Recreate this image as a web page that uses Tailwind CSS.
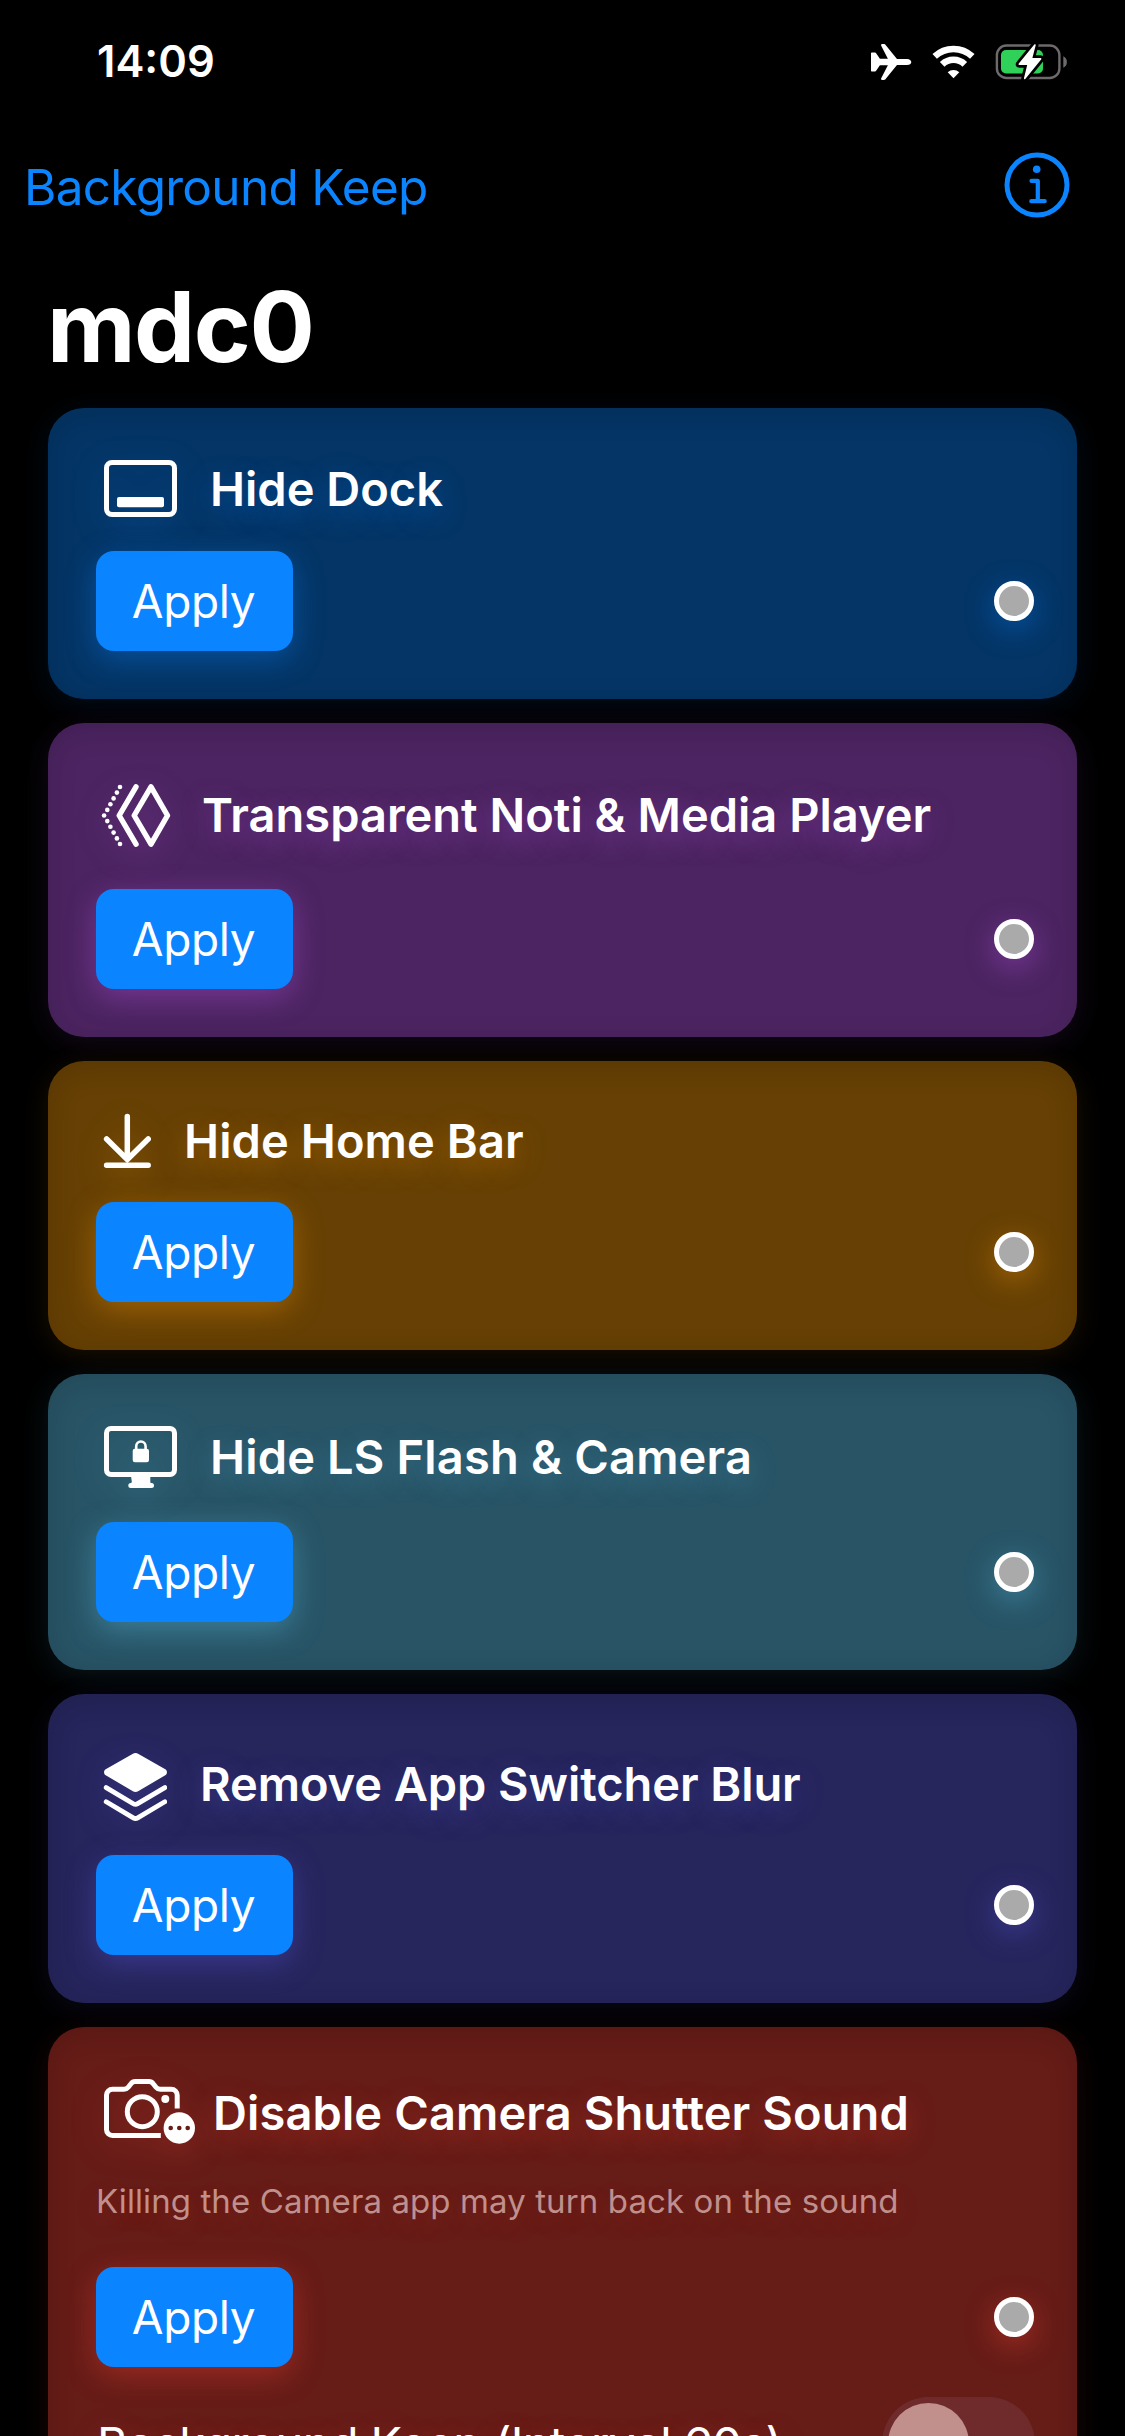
<!DOCTYPE html>
<html lang="en">
<head>
    <meta charset="UTF-8">
    <meta name="viewport" content="width=device-width, initial-scale=1.0">
    <title>mdc0</title>
    <!-- Tailwind CSS CDN -->
    <script src="https://cdn.jsdelivr.net/npm/@tailwindcss/browser@4"></script>
</head>
<body class="bg-black text-white font-[Inter,'Noto_Sans',sans-serif] w-[1125px] h-[2436px] overflow-hidden">

    <!-- Status bar -->
    <div class="h-[123px] flex items-center justify-between pl-[97px] pr-[57px]">
        <span class="text-[43.5px] leading-none font-semibold">14:09</span>
        <div class="flex items-center gap-5">
            <svg class="w-[41px] h-9" viewBox="0 0 41 36" fill="#fff">
                <path d="M1 8.6h2.6c.8 0 1.2.3 1.7 1l3.6 5.2h8L10.2 1.7C9.8.8 10.2 0 11.1 0h1.7c.8 0 1.3.2 1.8.9L26 14.9h10c2.6 0 4.3 1.5 4.3 3.1s-1.7 3.1-4.3 3.1H26L14.6 35.1c-.5.7-1 .9-1.8.9h-1.7c-.9 0-1.3-.8-.9-1.7l6.7-13.1h-8l-3.6 5.2c-.5.7-.9 1-1.7 1H1c-.6 0-1-.4-1-1V9.6c0-.6.4-1 1-1z"/>
            </svg>
            <svg class="w-[43px] h-9" viewBox="0 0 43 36" fill="none" stroke="#fff">
                <path d="M2.7 12.4a27.5 27.5 0 0 1 37.6 0" stroke-width="6.6"/>
                <path d="M10.2 20.4a16.2 16.2 0 0 1 22.6 0" stroke-width="6.6"/>
                <path d="M21.5 34.2l-5.8-5.9a8.3 8.3 0 0 1 11.6 0z" fill="#fff" stroke="none"/>
            </svg>
            <svg class="w-[73px] h-9" viewBox="0 0 73 36" fill="none">
                <rect x="1.9" y="1.5" width="62.5" height="32.5" rx="9.5" stroke="#6e6a6c" stroke-width="2.4"/>
                <path d="M68.3 12.3c2.3.9 3.6 3 3.6 5.7s-1.3 4.8-3.6 5.7z" fill="#6e6a6c"/>
                <rect x="6" y="6" width="42" height="23.5" rx="5" fill="#30d158"/>
                <path d="M39.3.6c.8-.9 1.7-.4 1.4.7l-3.3 12.6h8c1 0 1.3.8.7 1.6L30.5 34.7c-.8 1-1.8.5-1.5-.6l3.2-13h-7.7c-1 0-1.4-.8-.7-1.6z" fill="#fff" stroke="#000" stroke-width="5.5" paint-order="stroke"/>
            </svg>
        </div>
    </div>

    <!-- Nav bar -->
    <div class="h-[127px] flex items-center justify-between pl-6 pr-[55px]">
        <a class="pt-0.5 text-[49.5px] leading-none tracking-[-0.72px] text-[#0a84ff]">Background Keep</a>
        <svg class="w-[66px] h-[66px] mb-[3px]" viewBox="0 0 66 66" fill="none" stroke="#0a84ff" stroke-linecap="round" stroke-linejoin="round">
            <circle cx="33" cy="33" r="30" stroke-width="5"/>
            <circle cx="32.7" cy="17.3" r="3.8" fill="#0a84ff" stroke="none"/>
            <path d="M27.5 28.9h6.3v20M27.3 49.2h13.4" stroke-width="4.2"/>
        </svg>
    </div>

    <h1 class="h-[149px] flex items-center pl-[47px] pt-1 text-[97px] leading-none font-bold tracking-[-1.4px]">mdc0</h1>

    <!-- Tweaks list -->
    <div class="px-12 pt-[9px] flex flex-col gap-6">

        <div class="h-[291px] p-12 pr-[43px] rounded-[36px] bg-[#043566] shadow-[inset_0_6px_30px_rgba(0,0,0,0.14),0_6px_30px_rgba(10,132,255,0.1)]">
            <div class="h-[65px] flex items-center gap-[33px]">
                <svg class="w-[81px] h-[65px] drop-shadow-[0_8px_15px_rgba(10,132,255,0.25)]" viewBox="0 0 81 65" fill="none" stroke="#fff" stroke-width="5">
                    <rect x="10.5" y="6.5" width="68" height="52" rx="5.5"/>
                    <rect x="21" y="41" width="47" height="10.3" rx="2" fill="#fff" stroke="none"/>
                </svg>
                <h2 class="text-[47px] leading-none font-semibold text-shadow-[0_8px_28px_rgba(10,132,255,0.35)]">Hide Dock</h2>
            </div>
            <div class="mt-[30px] flex items-center justify-between">
                <button class="w-[197px] h-[100px] pr-0.5 rounded-[18px] bg-[#0a84ff] text-[46px] leading-none tracking-[-0.4px] shadow-[0_8px_30px_rgba(10,132,255,0.36)]">Apply</button>
                <span class="w-10 h-10 rounded-full bg-[#aaa] border-5 border-white shadow-[0_8px_30px_rgba(10,132,255,0.4)]"></span>
            </div>
        </div>

        <div class="h-[314px] p-12 pr-[43px] rounded-[36px] bg-[#4c2461] shadow-[inset_0_6px_30px_rgba(0,0,0,0.14),0_6px_30px_rgba(191,90,242,0.1)]">
            <div class="h-[88px] flex items-center gap-[31px]">
                <svg class="w-[75px] h-[88px] drop-shadow-[0_8px_15px_rgba(191,90,242,0.25)]" viewBox="0 0 75 88" fill="none" stroke="#fff" stroke-width="5.4" stroke-linecap="round" stroke-linejoin="round">
                    <path d="M55 15.8L71.5 44.5L55 73.2L38.2 44.5z"/>
                    <path d="M40 15.8L23.2 44.5L40 73.2"/>
                    <g fill="#fff" stroke="none">
                        <circle cx="24" cy="16" r="2.3"/>
                        <circle cx="20.9" cy="21.6" r="2.3"/>
                        <circle cx="17.6" cy="27.4" r="2.3"/>
                        <circle cx="14.4" cy="33.2" r="2.3"/>
                        <circle cx="11.3" cy="38.9" r="2.3"/>
                        <circle cx="8.1" cy="44.5" r="2.3"/>
                        <circle cx="11.3" cy="50.1" r="2.3"/>
                        <circle cx="14.4" cy="55.8" r="2.3"/>
                        <circle cx="17.6" cy="61.6" r="2.3"/>
                        <circle cx="20.9" cy="67.4" r="2.3"/>
                        <circle cx="24" cy="73" r="2.3"/>
                    </g>
                </svg>
                <h2 class="pb-0.5 text-[47px] leading-none font-semibold text-shadow-[0_8px_28px_rgba(191,90,242,0.35)]">Transparent Noti &amp; Media Player</h2>
            </div>
            <div class="mt-[30px] flex items-center justify-between">
                <button class="w-[197px] h-[100px] pr-0.5 rounded-[18px] bg-[#0a84ff] text-[46px] leading-none tracking-[-0.4px] shadow-[0_8px_30px_rgba(191,90,242,0.36)]">Apply</button>
                <span class="w-10 h-10 rounded-full bg-[#aaa] border-5 border-white shadow-[0_8px_30px_rgba(191,90,242,0.4)]"></span>
            </div>
        </div>

        <div class="h-[289px] p-12 pr-[43px] rounded-[36px] bg-[#664004] shadow-[inset_0_6px_30px_rgba(0,0,0,0.14),0_6px_30px_rgba(255,159,10,0.1)]">
            <div class="h-[63px] flex items-center gap-[33px]">
                <svg class="w-[55px] h-[63px] drop-shadow-[0_8px_15px_rgba(255,159,10,0.25)]" viewBox="0 0 55 63" fill="none" stroke="#fff" stroke-width="5.5" stroke-linecap="round" stroke-linejoin="round">
                    <path d="M31.3 7.5V50.5M10.6 30L31.3 50.5L52.2 30M10.6 56.2H52.2"/>
                </svg>
                <h2 class="text-[47px] leading-none font-semibold tracking-[0.09px] text-shadow-[0_8px_28px_rgba(255,159,10,0.35)]">Hide Home Bar</h2>
            </div>
            <div class="mt-[30px] flex items-center justify-between">
                <button class="w-[197px] h-[100px] pr-0.5 rounded-[18px] bg-[#0a84ff] text-[46px] leading-none tracking-[-0.4px] shadow-[0_8px_30px_rgba(255,159,10,0.36)]">Apply</button>
                <span class="w-10 h-10 rounded-full bg-[#aaa] border-5 border-white shadow-[0_8px_30px_rgba(255,159,10,0.4)]"></span>
            </div>
        </div>

        <div class="h-[296px] p-12 pr-[43px] rounded-[36px] bg-[#285466] shadow-[inset_0_6px_30px_rgba(0,0,0,0.14),0_6px_30px_rgba(100,210,255,0.1)]">
            <div class="h-[70px] flex items-center gap-8">
                <svg class="w-[82px] h-[70px] drop-shadow-[0_8px_15px_rgba(100,210,255,0.2)]" viewBox="0 0 82 70" fill="none">
                    <rect x="10.5" y="6.5" width="68" height="46" rx="4.5" stroke="#fff" stroke-width="5"/>
                    <path d="M35 54h19.3v5.5c0 1 .4 1.5 1.2 1.5a2.4 2.4 0 0 1 0 5H34.8a2.4 2.4 0 0 1 0-5c.9-.2 1-.6 1-1.5z" fill="#fff"/>
                    <rect x="36.7" y="26.8" width="16.3" height="13.5" rx="2.2" fill="#fff"/>
                    <path d="M40.2 28v-3.5a4.7 5 0 0 1 9.4 0V28" stroke="#fff" stroke-width="2.6"/>
                </svg>
                <h2 class="pb-0.5 text-[47px] leading-none font-semibold tracking-[0.16px] text-shadow-[0_8px_28px_rgba(100,210,255,0.28)]">Hide LS Flash &amp; Camera</h2>
            </div>
            <div class="mt-[30px] flex items-center justify-between">
                <button class="w-[197px] h-[100px] pr-0.5 rounded-[18px] bg-[#0a84ff] text-[46px] leading-none tracking-[-0.4px] shadow-[0_8px_30px_rgba(100,210,255,0.34)]">Apply</button>
                <span class="w-10 h-10 rounded-full bg-[#aaa] border-5 border-white shadow-[0_8px_30px_rgba(100,210,255,0.36)]"></span>
            </div>
        </div>

        <div class="h-[309px] p-12 pr-[43px] rounded-[36px] bg-[#26255c] shadow-[inset_0_6px_30px_rgba(0,0,0,0.14),0_6px_30px_rgba(94,92,230,0.1)]">
            <div class="h-[83px] flex items-center gap-[33px]">
                <svg class="w-[71px] h-[83px] drop-shadow-[0_8px_15px_rgba(94,92,230,0.25)]" viewBox="0 0 71 83" fill="none" stroke="#fff" stroke-width="4.8" stroke-linecap="round" stroke-linejoin="round">
                    <path d="M36.500 11.9a6 6 0 0 1 6 0L69.3 27.3c2.2 1.3 2.2 4.7 0 6L42.5 49.1a6 6 0 0 1-6 0L9.7 33.3c-2.2-1.3-2.2-4.7 0-6z" fill="#fff" stroke="none"/>
                    <path d="M10.2 45.6L37.3 61.7a4.4 4.4 0 0 0 4.4 0L68.8 45.6"/>
                    <path d="M10.2 59.8L37.3 75.9a4.4 4.4 0 0 0 4.4 0L68.8 59.8"/>
                </svg>
                <h2 class="text-[47px] leading-none font-semibold tracking-[-0.08px] text-shadow-[0_8px_28px_rgba(94,92,230,0.35)]">Remove App Switcher Blur</h2>
            </div>
            <div class="mt-[30px] flex items-center justify-between">
                <button class="w-[197px] h-[100px] pr-0.5 rounded-[18px] bg-[#0a84ff] text-[46px] leading-none tracking-[-0.4px] shadow-[0_8px_30px_rgba(94,92,230,0.36)]">Apply</button>
                <span class="w-10 h-10 rounded-full bg-[#aaa] border-5 border-white shadow-[0_8px_30px_rgba(94,92,230,0.4)]"></span>
            </div>
        </div>

        <div class="h-[511px] shrink-0 p-12 pr-[43px] rounded-[36px] bg-[#661c17] shadow-[inset_0_6px_30px_rgba(0,0,0,0.14),0_6px_30px_rgba(255,69,58,0.1)]">
            <div class="h-[76px] flex items-center gap-[18px]">
                <svg class="w-[99px] h-[76px] drop-shadow-[0_8px_15px_rgba(255,69,58,0.25)]" viewBox="0 0 99 76" fill="none" stroke="#fff" stroke-width="5" stroke-linejoin="round">
                    <path d="M64.8 60.5H16.5a6 6 0 0 1-6-6V20.2a6 6 0 0 1 6-6H28c2 0 3-.5 4.2-2l2.8-3.5c1.2-1.6 2.2-2.2 4.2-2.2H53c2 0 3 .6 4.2 2.2l2.8 3.5c1.2 1.5 2.2 2 4.2 2h11a6 6 0 0 1 6 6V33.5"/>
                    <circle cx="46.3" cy="36.7" r="15"/>
                    <circle cx="69.3" cy="24" r="4" fill="#fff" stroke="none"/>
                    <circle cx="83.3" cy="53" r="15.7" fill="#fff" stroke="none"/>
                    <g fill="#661c17" stroke="none">
                        <circle cx="74.7" cy="53" r="2.3"/>
                        <circle cx="83.3" cy="53" r="2.3"/>
                        <circle cx="91.7" cy="53" r="2.3"/>
                    </g>
                </svg>
                <h2 class="pb-0.5 text-[47px] leading-none font-semibold tracking-[0.11px] text-shadow-[0_8px_28px_rgba(255,69,58,0.35)]">Disable Camera Shutter Sound</h2>
            </div>
            <p class="mt-[30px] h-10 text-[33px] leading-10 tracking-[0.1px] text-[#bf908d] text-shadow-[0_8px_28px_rgba(255,69,58,0.2)]">Killing the Camera app may turn back on the sound</p>
            <div class="mt-[46px] flex items-center justify-between">
                <button class="w-[197px] h-[100px] pr-0.5 rounded-[18px] bg-[#0a84ff] text-[46px] leading-none tracking-[-0.4px] shadow-[0_8px_30px_rgba(255,69,58,0.36)]">Apply</button>
                <span class="w-10 h-10 rounded-full bg-[#aaa] border-5 border-white shadow-[0_8px_30px_rgba(255,69,58,0.4)]"></span>
            </div>
            <div class="mt-[30px] -mr-px flex items-center justify-between">
                <span class="pl-px text-[47px] leading-none tracking-[-0.6px] text-shadow-[0_8px_28px_rgba(255,69,58,0.35)]">Background Keep (Interval 60s)</span>
                <!-- Switch, off and disabled -->
                <span class="w-[153px] h-[93px] p-1.5 rounded-full bg-[#6f2b2b]">
                    <span class="block w-[81px] h-[81px] rounded-full bg-[#c1908d]"></span>
                </span>
            </div>
        </div>

    </div>

</body>
</html>
